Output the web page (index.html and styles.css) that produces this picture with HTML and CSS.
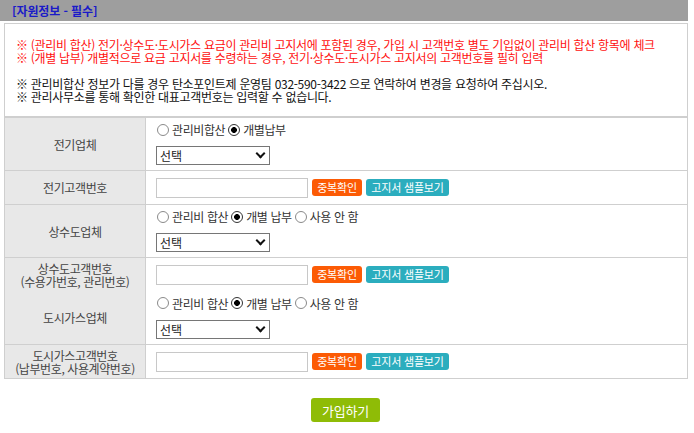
FILE: index.html
```html
<!DOCTYPE html>
<html lang="ko">
<head>
<meta charset="utf-8">
<link rel="stylesheet" href="styles.css">
</head>
<body>
<div class="page">
  <div class="head"><span class="head-title">[자원정보 - 필수]</span></div>
  <div class="notice">
    <p class="red">※ (관리비 합산) 전기·상수도·도시가스 요금이 관리비 고지서에 포함된 경우, 가입 시 고객번호 별도 기입없이 관리비 합산 항목에 체크</p>
    <p class="red">※ (개별 납부) 개별적으로 요금 고지서를 수령하는 경우, 전기·상수도·도시가스 고지서의 고객번호를 필히 입력</p>
    <p class="gap"></p>
    <p>※ 관리비합산 정보가 다를 경우 탄소포인트제 운영팀 032-590-3422 으로 연락하여 변경을 요청하여 주십시오.</p>
    <p>※ 관리사무소를 통해 확인한 대표고객번호는 입력할 수 없습니다.</p>
  </div>
  <table class="form">
    <tr class="tall">
      <th>전기업체</th>
      <td>
        <div class="radios">
          <label><input type="radio" name="e"> 관리비합산</label>
          <label><input type="radio" name="e" checked> 개별납부</label>
        </div>
        <div class="sel"><select><option>선택</option></select></div>
      </td>
    </tr>
    <tr class="short">
      <th>전기고객번호</th>
      <td>
        <div class="line">
          <input type="text" class="txt">
          <button class="btn orange">중복확인</button>
          <button class="btn teal">고지서 샘플보기</button>
        </div>
      </td>
    </tr>
    <tr class="tall">
      <th>상수도업체</th>
      <td>
        <div class="radios">
          <label><input type="radio" name="w"> 관리비 합산</label>
          <label><input type="radio" name="w" checked> 개별 납부</label>
          <label><input type="radio" name="w"> 사용 안 함</label>
        </div>
        <div class="sel"><select><option>선택</option></select></div>
      </td>
    </tr>
    <tr class="short nob">
      <th>상수도고객번호<br>(수용가번호, 관리번호)</th>
      <td>
        <div class="line">
          <input type="text" class="txt">
          <button class="btn orange">중복확인</button>
          <button class="btn teal">고지서 샘플보기</button>
        </div>
      </td>
    </tr>
    <tr class="tall">
      <th>도시가스업체</th>
      <td>
        <div class="radios">
          <label><input type="radio" name="g"> 관리비 합산</label>
          <label><input type="radio" name="g" checked> 개별 납부</label>
          <label><input type="radio" name="g"> 사용 안 함</label>
        </div>
        <div class="sel"><select><option>선택</option></select></div>
      </td>
    </tr>
    <tr class="short">
      <th>도시가스고객번호<br>(납부번호, 사용계약번호)</th>
      <td>
        <div class="line">
          <input type="text" class="txt">
          <button class="btn orange">중복확인</button>
          <button class="btn teal">고지서 샘플보기</button>
        </div>
      </td>
    </tr>
  </table>
  <div class="submit-row"><button class="submit">가입하기</button></div>
</div>
</body>
</html>
```

FILE: styles.css
```css
* { box-sizing: border-box; }
html, body { margin: 0; padding: 0; background: #fff; }
body {
  font-family: "Noto Sans CJK KR", "Noto Sans", sans-serif;
  font-size: 12px;
  color: #333;
}
.page { width: 688px; }
.head {
  height: 21px;
  background: #9e9e9e;
  padding-left: 12px;
  display: flex;
  align-items: center;
}
.head-title {
  color: #1a1ac8;
  font-weight: bold;
  font-size: 12px;
  letter-spacing: -0.1px;
}
.notice {
  margin: 2px 0 0 4px;
  border: 1px solid #cfcfcf;
  padding: 14px 11px 13px;
  letter-spacing: -0.3px;
}
.notice p { margin: 0; line-height: 13px; color: #111; }
.notice p.red { color: #ff1010; }
.notice p.gap { height: 13px; }
.form {
  margin-left: 4px;
  width: 684px;
  border-collapse: collapse;
  border: 1px solid #cfcfcf;
}
.form th {
  width: 141px;
  background: #e8e8e8;
  font-weight: normal;
  color: #444;
  line-height: 13px;
  text-align: center;
  border: 1px solid #cfcfcf;
  border-left: none;
  padding: 0;
  letter-spacing: -0.4px;
}
.form td {
  border-top: 1px solid #cfcfcf;
  border-bottom: 1px solid #cfcfcf;
  padding: 0 0 0 10px;
  vertical-align: middle;
}
.form tr.nob th, .form tr.nob td { border-bottom: none; }
.form tr.nob + tr th, .form tr.nob + tr td { border-top: none; }
.form tr.tall td { padding-top: 3px; padding-bottom: 5px; }
.form tr.tall { height: 53px; }
.form tr.short { height: 34px; }
.radios {
  display: flex;
  align-items: center;
  height: 17px;
  color: #333;
  letter-spacing: -0.4px;
}
.radios label { display: flex; align-items: center; margin-right: 2px; }
.radios input {
  appearance: none;
  -webkit-appearance: none;
  width: 12px;
  height: 12px;
  margin: 0 3px 0 1px;
  border: 1px solid #8a8a8a;
  border-radius: 50%;
  background: #fff;
}
.radios input:checked {
  border-color: #333;
  background: radial-gradient(circle, #000 0 2.6px, #fff 3.2px);
}
.sel {
  position: relative;
  width: 114px;
  height: 19px;
  margin-top: 8px;
}
.sel select {
  appearance: none;
  -webkit-appearance: none;
  width: 114px;
  height: 19px;
  border: 1px solid #767676;
  border-radius: 0;
  background: #fff;
  font-family: inherit;
  font-size: 12px;
  color: #222;
  padding: 0 0 0 3px;
  line-height: 17px;
}
.sel::after {
  content: "";
  position: absolute;
  right: 6px;
  top: 4px;
  width: 5px;
  height: 5px;
  border-right: 2px solid #111;
  border-bottom: 2px solid #111;
  transform: rotate(45deg);
  pointer-events: none;
}
.line { display: flex; align-items: center; }
.txt {
  width: 152px;
  height: 20px;
  border: 1px solid #c8c8c8;
  margin: 0 4px 0 0;
  padding: 0;
}
.btn {
  height: 17px;
  border: none;
  border-radius: 3px;
  color: #fff;
  font-family: inherit;
  font-size: 11px;
  padding: 0;
  margin: 0 4px 0 0;
  line-height: 17px;
  letter-spacing: -0.2px;
}
.btn.orange { background: #fc5b05; width: 50px; }
.btn.teal { background: #2badbe; width: 83px; }
.submit-row {
  display: flex;
  justify-content: center;
  padding-top: 19px;
  padding-left: 3px;
}
.submit {
  width: 69px;
  height: 24px;
  border: none;
  border-radius: 3px;
  background: #8fbc06;
  color: #fff;
  font-family: inherit;
  font-size: 13px;
  padding: 0;
  letter-spacing: -0.2px;
}
```
